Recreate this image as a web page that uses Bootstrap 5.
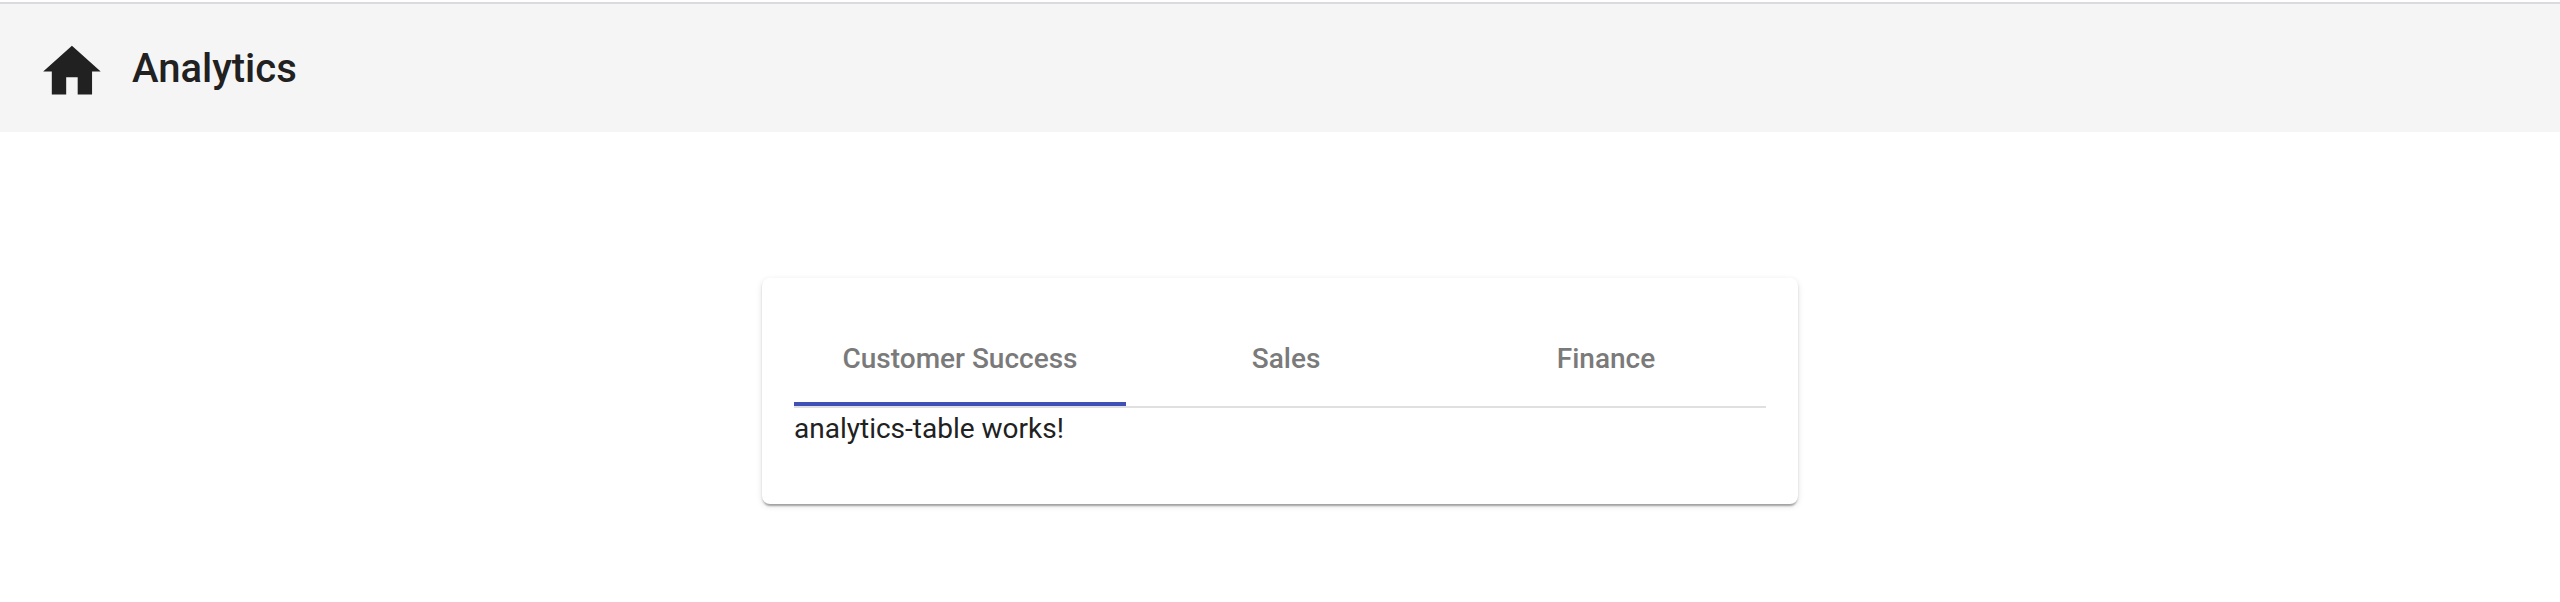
<!DOCTYPE html>
<html lang="en">
<head>
<meta charset="utf-8">
<meta name="viewport" content="width=device-width, initial-scale=1">
<title>Analytics</title>
<link href="https://cdn.jsdelivr.net/npm/bootstrap@5.3.0/dist/css/bootstrap.min.css" rel="stylesheet">
<style>
  body { font-family: Roboto, sans-serif; color: rgba(0,0,0,.87); background: #fff; min-height: 602px; padding-top: 2px; }
  .toolbar { height: 130px; background: #f5f5f5; border-top: 2px solid #dadae0; padding: 0 32px 0 37px; }
  .toolbar svg { width: 69px; height: 69px; fill: #212121; margin-top: 6px; }
  .toolbar h1 { font-size: 40px; font-weight: 500; line-height: 64px; margin: 1px 0 0 26px; color: #212121; }
  .panel { width: 1036px; height: 226px; margin: 146px auto 0; padding: 32px; border: 0; border-radius: 8px;
    box-shadow: 0 4px 2px -2px rgba(0,0,0,.2), 0 2px 2px 0 rgba(0,0,0,.14), 0 2px 6px 0 rgba(0,0,0,.12); }
  .tab-strip { height: 98px; border-bottom: 2px solid #e0e0e0; }
  .tab-strip .nav-link { width: 320px; height: 96px; padding: 0; border-radius: 0; font-size: 28px; font-weight: 500;
    line-height: 97px; text-align: center; color: #7a7a7a; }
  .tab-strip .nav-link.active { width: 332px; border-bottom: 4px solid #3f51b5; }
  .tab-text { font-size: 28px; line-height: 41px; color: #212121; }
</style>
</head>
<body>
<header class="toolbar d-flex align-items-center">
  <svg viewBox="-0.15 0 24 24" aria-hidden="true"><path d="M10 20v-6h4v6h5v-8h3L12 3 2 12h3v8z"/></svg>
  <h1>Analytics</h1>
</header>
<main>
  <section class="card panel">
    <nav class="nav flex-nowrap tab-strip">
      <a class="nav-link active" href="#">Customer Success</a>
      <a class="nav-link" href="#">Sales</a>
      <a class="nav-link" href="#">Finance</a>
    </nav>
    <p class="tab-text mb-0">analytics-table works!</p>
  </section>
</main>
<script src="https://cdn.jsdelivr.net/npm/bootstrap@5.3.0/dist/js/bootstrap.bundle.min.js"></script>
</body>
</html>
